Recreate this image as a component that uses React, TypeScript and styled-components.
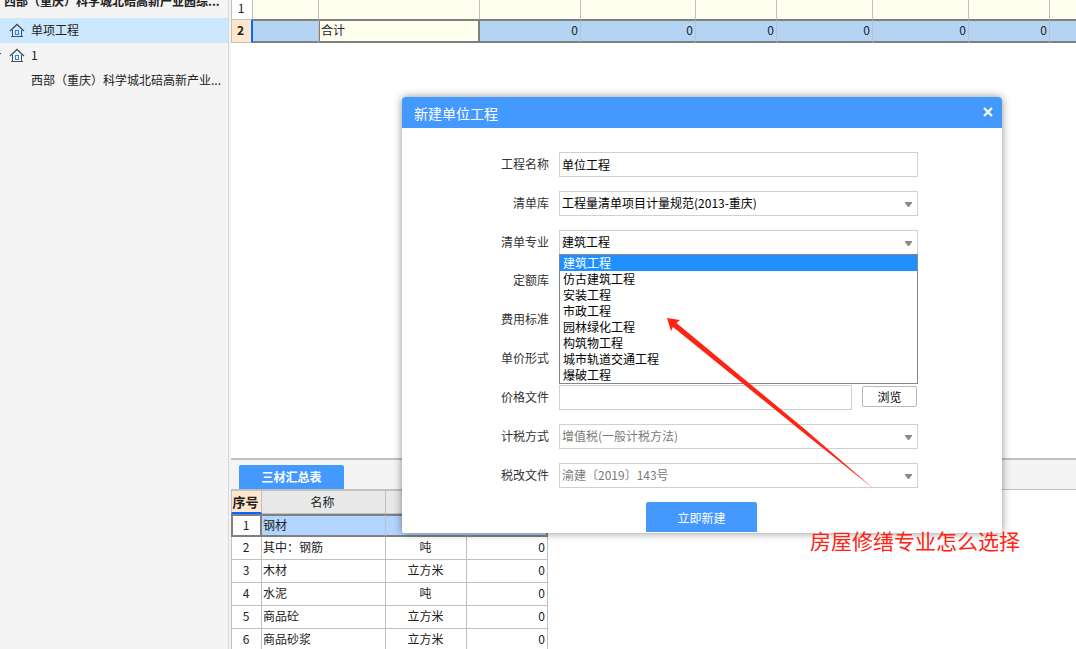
import React from "react";
import styled, { createGlobalStyle, css } from "styled-components";

const GlobalStyle = createGlobalStyle`
  *, *::before, *::after { box-sizing: border-box; }
  body {
    margin: 0;
    background: #ffffff;
    color: #222222;
    font: 12px/16px "Noto Sans CJK SC", sans-serif;
  }
  button, input, select { font: inherit; }
`;

const Page = styled.div`
  position: relative;
  display: flex;
  height: 100vh;
  overflow: hidden;
`;

const Sidebar = styled.nav`
  flex: none;
  width: 231px;
  padding-right: 2px;
  overflow: hidden;
  background: #f4f4f4;
`;

const Tree = styled.ul`
  height: calc(100% + 12px);
  margin: -12px 0 0;
  padding: 0;
  list-style: none;
  border-right: 1px solid #d8d8d8;
`;

const TreeRoot = styled.li`
  height: 30px;
  padding-left: 4px;
  line-height: 26px;
  font-weight: 700;
  white-space: nowrap;
`;

const TreeItem = styled.li<{ $selected?: boolean }>`
  display: flex;
  align-items: center;
  height: 25px;
  padding-bottom: 2px;
  white-space: nowrap;
  background: ${(p) => (p.$selected ? "#cce8ff" : "transparent")};
`;

const IconSlot = styled.span`
  display: flex;
  flex: none;
  align-items: center;
  width: 31px;
  padding-top: 2px;
`;

const Main = styled.main`
  display: flex;
  flex: 1;
  flex-direction: column;
  min-width: 0;
`;

const UpperPane = styled.section`
  flex: 1;
  min-height: 0;
  overflow: hidden;
`;

const LowerPane = styled.section`
  flex: none;
  height: 191px;
  overflow: hidden;
  border-top: 2px solid #c0c0c0;
`;

const TabBar = styled.div`
  display: flex;
  align-items: flex-end;
  height: 30px;
  padding-left: 8px;
  background: #f4f4f4;
  border-bottom: 1px solid #c0c0c0;
`;

const Tab = styled.button`
  width: 105px;
  height: 24px;
  padding: 0;
  border: 0;
  border-radius: 2px 2px 0 0;
  background: #4499ff;
  color: #ffffff;
  font-weight: 700;
`;

const sheet = css`
  table-layout: fixed;
  border-collapse: separate;
  border-spacing: 0;
  line-height: 16px;
`;

const CostSheet = styled.table`
  ${sheet}
  width: 100%;
`;

const MaterialSheet = styled.table`
  ${sheet}
  width: 317px;
`;

const RowNumber = styled.th<{ $current?: boolean }>`
  height: 19px;
  padding: 0 2px 3px 0;
  font-weight: ${(p) => (p.$current ? 700 : 400)};
  border: solid #c0c0c0;
  border-width: 0 1px 0 1px;
  text-align: center;
  ${(p) =>
    p.$current
      ? css`
          height: 24px;
          background: #ffe6cc;
          border-width: 1px 2px 1px 1px;
          border-right-color: #0a64ff;
        `
      : ""}
`;

const CostCell = styled.td`
  padding: 0;
  background: #fffff0;
  border-right: 1px solid #c0c0c0;

  &:last-child {
    border-right: 0;
  }
`;

const TotalCell = styled.td<{ $editing?: boolean }>`
  padding: 0 2px 2px 1px;
  text-align: ${(p) => (p.$editing ? "left" : "right")};
  background: ${(p) => (p.$editing ? "#fffff0" : "#b3d5f3")};
  border: solid #808080;
  border-width: ${(p) => (p.$editing ? "2px 2px 2px 1px" : "2px 1px 2px 0")};
  border-right-color: ${(p) => (p.$editing ? "#808080" : "#c0c0c0")};

  &:last-child {
    border-right: 0;
  }
`;

const HeadCell = styled.th<{ $current?: boolean }>`
  height: 24px;
  padding: 0 2px 0 0;
  font-weight: ${(p) => (p.$current ? 700 : 400)};
  background: ${(p) => (p.$current ? "#ffe6cc" : "#e8e8e8")};
  border: solid #c0c0c0;
  border-width: 1px 1px 1px 0;
  ${(p) =>
    p.$current
      ? css`
          font-size: 13px;
          border-left-width: 1px;
          border-bottom: 2px solid #0a64ff;
        `
      : ""}
`;

const MaterialCell = styled.td<{ $align?: string }>`
  height: 23px;
  padding: 0 2px 2px 1px;
  text-align: ${(p) => p.$align || "left"};
  border-right: 1px solid #c0c0c0;
  border-bottom: 1px solid #c0c0c0;

  &:first-child {
    border-left: 1px solid #c0c0c0;
  }
`;

const MaterialRow = styled.tr<{ $selected?: boolean }>`
  ${(p) =>
    p.$selected
      ? css`
          ${MaterialCell} {
            background: #b3d4ff;
            border-top: 2px solid #808080;
            border-bottom: 2px solid #808080;
          }
          ${MaterialCell}:first-child {
            background: #ffffff;
            border: 2px solid #808080;
          }
          ${MaterialCell}:last-child {
            border-right: 2px solid #808080;
          }
        `
      : ""}
`;

const Dialog = styled.div`
  position: absolute;
  top: 97px;
  left: 402px;
  width: 600px;
  background: #ffffff;
  border-radius: 4px 4px 2px 2px;
  box-shadow: 0 0 9px rgba(0, 0, 0, 0.45);
`;

const DialogHeader = styled.header`
  display: flex;
  align-items: center;
  justify-content: space-between;
  height: 31px;
  padding: 0 8px 0 12px;
  border-radius: 4px 4px 0 0;
  background: #4499ff;
  color: #ffffff;
`;

const DialogTitle = styled.h1`
  margin: 0;
  font-size: 14px;
  line-height: 20px;
  font-weight: 400;
`;

const CloseButton = styled.button`
  display: flex;
  padding: 0 0 2px;
  border: 0;
  background: none;
`;

const Form = styled.form`
  display: flex;
  flex-direction: column;
  gap: 14px;
  padding: 24px 84px 1px 0;
`;

const Field = styled.div<{ $short?: boolean }>`
  display: flex;
  align-items: center;
  height: ${(p) => (p.$short ? 24 : 25)}px;
`;

const Label = styled.label`
  flex: none;
  width: 147px;
  margin-right: 10px;
  padding-bottom: 2px;
  text-align: right;
  color: #333333;
`;

const Control = styled.div`
  position: relative;
  flex: 1;
  min-width: 0;
`;

const box = css`
  display: block;
  width: 100%;
  height: 25px;
  margin: 0;
  padding: 0 2px 1px;
  border: 1px solid #d0d0d0;
  border-radius: 0;
  background: #ffffff;
  color: #000000;
  outline: none;
`;

const TextBox = styled.input`
  ${box}
`;

const DropDown = styled.select<{ $short?: boolean }>`
  ${box}
  height: ${(p) => (p.$short ? 24 : 25)}px;
  appearance: none;

  &:disabled {
    color: #7a7a7a;
    opacity: 1;
  }
`;

const Caret = styled.svg`
  position: absolute;
  top: 11px;
  right: 6px;
  pointer-events: none;
`;

const Options = styled.ul`
  position: absolute;
  z-index: 1;
  top: 24px;
  left: 0;
  right: 0;
  margin: 0;
  padding: 0;
  list-style: none;
  background: #ffffff;
  border: 1px solid #828790;
`;

const Option = styled.li<{ $selected?: boolean }>`
  padding-left: 3px;
  line-height: 16px;
  color: ${(p) => (p.$selected ? "#ffffff" : "#000000")};
  background: ${(p) => (p.$selected ? "#1e90ff" : "transparent")};
`;

const BrowseButton = styled.button`
  width: 55px;
  height: 21px;
  margin: 0 1px 2px 10px;
  padding: 0;
  line-height: 16px;
  border: 1px solid #b8b8b8;
  border-radius: 2px;
  background: #ffffff;
  color: #000000;
`;

const SubmitButton = styled.button`
  width: 111px;
  height: 30px;
  margin-left: 244px;
  padding: 2px 0 0;
  border: 0;
  border-radius: 2px 2px 0 0;
  background: #4499ff;
  color: #ffffff;
`;

const Arrow = styled.svg`
  position: absolute;
  z-index: 2;
  top: 220px;
  left: 264px;
  pointer-events: none;
`;

const Note = styled.p`
  position: absolute;
  z-index: 2;
  top: 428px;
  left: 408px;
  margin: 0;
  font-size: 21px;
  line-height: 30px;
  white-space: nowrap;
  color: #ff2313;
`;

const Gutter = styled.svg`
  flex: none;
`;

const House = ({ open }: { open?: boolean }) => (
  <>
    <Gutter width="9" height="15" viewBox="0 0 9 15" aria-hidden="true">
      {open && <path d="M0 5 H1.5 L0 6.5 Z" fill="#333333" />}
    </Gutter>
    <svg width="16" height="15" viewBox="0 0 16 15" fill="none" aria-hidden="true">
      <path d="M1 8 L8 1.5 L15 8" stroke="#46505a" strokeWidth="1.3" />
      <path d="M3.5 7 V13 M12.5 7 V13 M2 13.5 H14" stroke="#46505a" />
      <rect x="6.5" y="7.5" width="3" height="4" stroke="#1e88ff" />
    </svg>
  </>
);

const DownCaret = () => (
  <Caret width="7" height="6" viewBox="0 0 7 6" aria-hidden="true">
    <path d="M0 0 H7 V1 L4 5 H3 L0 1 Z" fill="#8a8a8a" />
  </Caret>
);

const costColumns = [22, 66, 161, 101, 115, 81, 96, 96, 81];
const totals = ["0", "0", "0", "0", "0", "0", ""];
const materials = [
  ["钢材", "", ""],
  ["其中：钢筋", "吨", "0"],
  ["木材", "立方米", "0"],
  ["水泥", "吨", "0"],
  ["商品砼", "立方米", "0"],
  ["商品砂浆", "立方米", "0"],
];
const specialties = [
  "建筑工程",
  "仿古建筑工程",
  "安装工程",
  "市政工程",
  "园林绿化工程",
  "构筑物工程",
  "城市轨道交通工程",
  "爆破工程",
];

type SelectFieldProps = {
  id: string;
  label: string;
  value?: string;
  disabled?: boolean;
  short?: boolean;
  children?: React.ReactNode;
};

const SelectField = ({ id, label, value, disabled, short, children }: SelectFieldProps) => (
  <Field $short={short}>
    <Label htmlFor={id}>{label}</Label>
    <Control>
      <DropDown id={id} disabled={disabled} $short={short}>
        {value && <option>{value}</option>}
      </DropDown>
      <DownCaret />
      {children}
    </Control>
  </Field>
);

export default function App() {
  return (
    <>
      <GlobalStyle />
      <Page>
        <Sidebar>
          <Tree>
            <TreeRoot>西部（重庆）科学城北碚高新产业园综...</TreeRoot>
            <TreeItem $selected>
              <IconSlot><House /></IconSlot>
              单项工程
            </TreeItem>
            <TreeItem>
              <IconSlot><House open /></IconSlot>
              1
            </TreeItem>
            <TreeItem>
              <IconSlot />
              西部（重庆）科学城北碚高新产业...
            </TreeItem>
          </Tree>
        </Sidebar>

        <Main>
          <UpperPane>
            <CostSheet>
              <colgroup>
                {costColumns.map((w, i) => <col key={i} width={w} />)}
                <col />
              </colgroup>
              <tbody>
                <tr>
                  <RowNumber scope="row">1</RowNumber>
                  {Array.from({ length: 9 }, (_, i) => <CostCell key={i} />)}
                </tr>
                <tr>
                  <RowNumber scope="row" $current>2</RowNumber>
                  <TotalCell />
                  <TotalCell $editing>合计</TotalCell>
                  {totals.map((t, i) => <TotalCell key={i}>{t}</TotalCell>)}
                </tr>
              </tbody>
            </CostSheet>
          </UpperPane>

          <LowerPane>
            <TabBar><Tab type="button">三材汇总表</Tab></TabBar>
            <MaterialSheet>
              <colgroup>
                <col width={31} />
                <col width={124} />
                <col width={81} />
                <col width={81} />
              </colgroup>
              <thead>
                <tr>
                  <HeadCell scope="col" $current>序号</HeadCell>
                  <HeadCell scope="col">名称</HeadCell>
                  <HeadCell />
                  <HeadCell />
                </tr>
              </thead>
              <tbody>
                {materials.map(([name, unit, amount], i) => (
                  <MaterialRow key={name} $selected={i === 0}>
                    <MaterialCell $align="center">{i + 1}</MaterialCell>
                    <MaterialCell>{name}</MaterialCell>
                    <MaterialCell $align="center">{unit}</MaterialCell>
                    <MaterialCell $align="right">{amount}</MaterialCell>
                  </MaterialRow>
                ))}
              </tbody>
            </MaterialSheet>
          </LowerPane>
        </Main>

        <Dialog role="dialog" aria-labelledby="dialog-title">
          <DialogHeader>
            <DialogTitle id="dialog-title">新建单位工程</DialogTitle>
            <CloseButton type="button" aria-label="关闭">
              <svg width="12" height="10" viewBox="0 0 12 10" aria-hidden="true">
                <path d="M2 1 L10 9 M10 1 L2 9" stroke="#ffffff" strokeWidth="2.2" />
              </svg>
            </CloseButton>
          </DialogHeader>
          <Form>
            <Field>
              <Label htmlFor="name">工程名称</Label>
              <Control><TextBox id="name" defaultValue="单位工程" /></Control>
            </Field>
            <SelectField id="list" label="清单库" value="工程量清单项目计量规范(2013-重庆)" />
            <SelectField id="specialty" label="清单专业" value="建筑工程">
              <Options role="listbox" aria-label="清单专业">
                {specialties.map((s, i) => (
                  <Option key={s} role="option" aria-selected={i === 0} $selected={i === 0}>{s}</Option>
                ))}
              </Options>
            </SelectField>
            <SelectField id="quota" label="定额库" short />
            <SelectField id="fee" label="费用标准" />
            <SelectField id="price" label="单价形式" />
            <Field>
              <Label htmlFor="file">价格文件</Label>
              <Control><TextBox id="file" /></Control>
              <BrowseButton type="button">浏览</BrowseButton>
            </Field>
            <SelectField id="tax" label="计税方式" value="增值税(一般计税方法)" disabled />
            <SelectField id="reform" label="税改文件" value="渝建〔2019〕143号" disabled />
            <SubmitButton type="button">立即新建</SubmitButton>
          </Form>
          <Arrow width="212" height="176" viewBox="0 0 212 176" aria-hidden="true">
            <path d="M1 1 L14 3 L10.5 6 L138 111.5 L208 172 L136 114.5 L7 10 L5 14 Z" fill="#ff2313" />
          </Arrow>
          <Note>房屋修缮专业怎么选择</Note>
        </Dialog>
      </Page>
    </>
  );
}
